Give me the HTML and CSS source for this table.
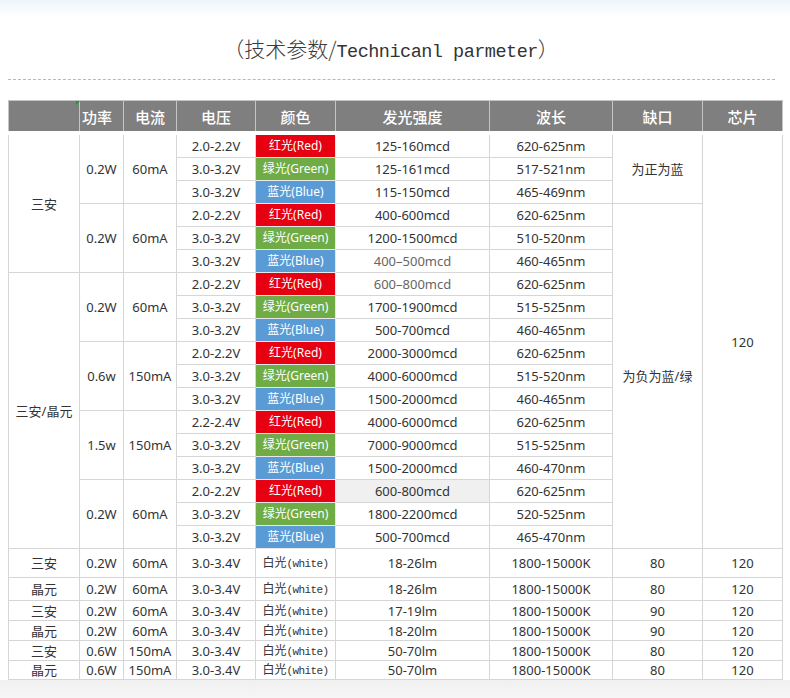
FILE: index.html
```html
<!DOCTYPE html>
<html lang="zh-CN">
<head>
<meta charset="utf-8">
<title>技术参数</title>
<link rel="stylesheet" href="styles.css">
</head>
<body>
<div class="page">
  <h1 class="title">（技术参数/<span class="lat">Technicanl parmeter</span>）</h1>
  <div class="rule"></div>
  <table class="spec">
    <colgroup>
      <col style="width:71px"><col style="width:44px"><col style="width:53px"><col style="width:79px"><col style="width:80px"><col style="width:154px"><col style="width:123px"><col style="width:90px"><col style="width:80px">
    </colgroup>
    <thead>
      <tr><th><span class="flag"></span></th><th class="left">功率</th><th>电流</th><th>电压</th><th>颜色</th><th>发光强度</th><th>波长</th><th>缺口</th><th>芯片</th></tr>
    </thead>
    <tbody class="main">
      <tr><td rowspan="6">三安</td><td rowspan="3">0.2W</td><td rowspan="3">60mA</td><td>2.0-2.2V</td><td class="c red">红光(Red)</td><td>125-160mcd</td><td>620-625nm</td><td rowspan="3">为正为蓝</td><td rowspan="18">120</td></tr>
      <tr><td>3.0-3.2V</td><td class="c green">绿光(Green)</td><td>125-161mcd</td><td>517-521nm</td></tr>
      <tr><td>3.0-3.2V</td><td class="c blue">蓝光(Blue)</td><td>115-150mcd</td><td>465-469nm</td></tr>
      <tr><td rowspan="3">0.2W</td><td rowspan="3">60mA</td><td>2.0-2.2V</td><td class="c red">红光(Red)</td><td>400-600mcd</td><td>620-625nm</td><td rowspan="15">为负为蓝/绿</td></tr>
      <tr><td>3.0-3.2V</td><td class="c green">绿光(Green)</td><td>1200-1500mcd</td><td>510-520nm</td></tr>
      <tr><td>3.0-3.2V</td><td class="c blue">蓝光(Blue)</td><td class="dim">400–500mcd</td><td>460-465nm</td></tr>
      <tr><td rowspan="12">三安/晶元</td><td rowspan="3">0.2W</td><td rowspan="3">60mA</td><td>2.0-2.2V</td><td class="c red">红光(Red)</td><td class="dim">600–800mcd</td><td>620-625nm</td></tr>
      <tr><td>3.0-3.2V</td><td class="c green">绿光(Green)</td><td>1700-1900mcd</td><td>515-525nm</td></tr>
      <tr><td>3.0-3.2V</td><td class="c blue">蓝光(Blue)</td><td>500-700mcd</td><td>460-465nm</td></tr>
      <tr><td rowspan="3">0.6w</td><td rowspan="3">150mA</td><td>2.0-2.2V</td><td class="c red">红光(Red)</td><td>2000-3000mcd</td><td>620-625nm</td></tr>
      <tr><td>3.0-3.2V</td><td class="c green">绿光(Green)</td><td>4000-6000mcd</td><td>515-520nm</td></tr>
      <tr><td>3.0-3.2V</td><td class="c blue">蓝光(Blue)</td><td>1500-2000mcd</td><td>460-465nm</td></tr>
      <tr><td rowspan="3">1.5w</td><td rowspan="3">150mA</td><td>2.2-2.4V</td><td class="c red">红光(Red)</td><td>4000-6000mcd</td><td>620-625nm</td></tr>
      <tr><td>3.0-3.2V</td><td class="c green">绿光(Green)</td><td>7000-9000mcd</td><td>515-525nm</td></tr>
      <tr><td>3.0-3.2V</td><td class="c blue">蓝光(Blue)</td><td>1500-2000mcd</td><td>460-470nm</td></tr>
      <tr><td rowspan="3">0.2W</td><td rowspan="3">60mA</td><td>2.0-2.2V</td><td class="c red">红光(Red)</td><td class="shade">600-800mcd</td><td>620-625nm</td></tr>
      <tr><td>3.0-3.2V</td><td class="c green">绿光(Green)</td><td>1800-2200mcd</td><td>520-525nm</td></tr>
      <tr><td>3.0-3.2V</td><td class="c blue">蓝光(Blue)</td><td>500-700mcd</td><td>465-470nm</td></tr>
    </tbody>
    <tbody class="white">
      <tr class="h29"><td>三安</td><td>0.2W</td><td>60mA</td><td>3.0-3.4V</td><td class="w">白光<span class="mono">(white)</span></td><td>18-26lm</td><td>1800-15000K</td><td>80</td><td>120</td></tr>
      <tr class="h23"><td>晶元</td><td>0.2W</td><td>60mA</td><td>3.0-3.4V</td><td class="w">白光<span class="mono">(white)</span></td><td>18-26lm</td><td>1800-15000K</td><td>80</td><td>120</td></tr>
      <tr class="h20"><td>三安</td><td>0.2W</td><td>60mA</td><td>3.0-3.4V</td><td class="w">白光<span class="mono">(white)</span></td><td>17-19lm</td><td>1800-15000K</td><td>90</td><td>120</td></tr>
      <tr class="h20"><td>晶元</td><td>0.2W</td><td>60mA</td><td>3.0-3.4V</td><td class="w">白光<span class="mono">(white)</span></td><td>18-20lm</td><td>1800-15000K</td><td>90</td><td>120</td></tr>
      <tr class="h20"><td>三安</td><td>0.6W</td><td>150mA</td><td>3.0-3.4V</td><td class="w">白光<span class="mono">(white)</span></td><td>50-70lm</td><td>1800-15000K</td><td>80</td><td>120</td></tr>
      <tr class="h19"><td>晶元</td><td>0.6W</td><td>150mA</td><td>3.0-3.4V</td><td class="w">白光<span class="mono">(white)</span></td><td>50-70lm</td><td>1800-15000K</td><td>80</td><td>120</td></tr>
    </tbody>
  </table>
  <div class="foot"></div>
</div>
</body>
</html>
```
FILE: styles.css
```css
html, body {
  margin: 0;
  padding: 0;
}
body {
  width: 790px;
  height: 698px;
  overflow: hidden;
  background: #fff;
  font-family: "Noto Sans", "Noto Sans CJK SC", sans-serif;
  color: #333;
}
.page {
  height: 698px;
  display: flex;
  flex-direction: column;
  background: linear-gradient(to bottom, #eef5fa 0, #f6fafd 8px, #fff 18px);
}
.title {
  margin: 36px 8px 0 0;
  height: 24px;
  line-height: 24px;
  text-align: center;
  font-family: "Noto Sans CJK SC", sans-serif;
  font-weight: 300;
  font-size: 21px;
  color: #3a3a3a;
}
.title .lat {
  font-family: "Liberation Mono", monospace;
  font-size: 18.5px;
  letter-spacing: -0.5px;
  color: #333;
}
.rule {
  margin: 19px 15px 0 8px;
  height: 0;
  border-top: 1px dashed #b8b8b8;
  box-shadow: 0 4px 0 -3px #eee;
}
.spec {
  margin: 20px 0 0 8px;
  width: 775px;
  border-collapse: collapse;
  table-layout: fixed;
  font-size: 13px;
  border: 1px solid #d0d0d0;
}
.spec th {
  position: relative;
  height: 30px;
  padding: 0;
  background: #7f7f7f;
  color: #fff;
  font-family: "Noto Sans CJK SC", sans-serif;
  font-weight: 500;
  font-size: 15px;
  text-align: center;
  border-left: 1px solid #c4c4c4;
  border-right: 1px solid #c4c4c4;
  border-top: 1px solid #c4c4c4;
  border-bottom: 4px solid #fff;
}
.spec th.left {
  text-align: left;
  padding-left: 2px;
}
.flag {
  position: absolute;
  left: 0;
  top: 0;
  width: 0;
  height: 0;
  border-top: 4px solid #1a9a2a;
  border-right: 4px solid transparent;
}
.spec th:first-child .flag {
  left: auto;
  right: -1px;
}
.spec td {
  padding: 0;
  height: 22px;
  text-align: center;
  vertical-align: middle;
  border: 1px solid #d6d6d6;
  white-space: nowrap;
  line-height: 16px;
}
.spec td.c {
  color: #fff;
  font-family: "Noto Sans", "Noto Sans CJK SC", sans-serif;
  font-size: 12px;
  border-color: #e8e8e8;
}
.spec td.red { background: #e60012; }
.spec td.green { background: #6fac46; }
.spec td.blue { background: #5b9bd5; }
.spec td.dim { color: #666; }
.spec td.shade { background: #f0f0f0; }
.spec td.w {
  font-family: "Noto Sans CJK SC", sans-serif;
  font-size: 12px;
}
.mono {
  font-family: "Liberation Mono", monospace;
  font-size: 11px;
  letter-spacing: -0.6px;
}
.white tr.h29 td { height: 28px; }
.white tr.h23 td { height: 22px; }
.white tr.h20 td { height: 19px; }
.white tr.h19 td { height: 18px; }
.foot {
  flex: 1;
  margin-top: 0;
  background: linear-gradient(to bottom, #f0f0f0, #f6f6f6);
}
```
